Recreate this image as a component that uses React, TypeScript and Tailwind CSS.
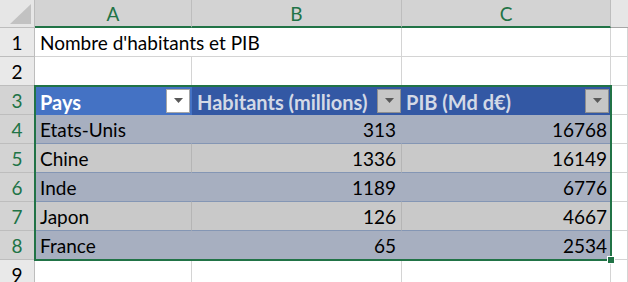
const cols = ["A", "B", "C"];

type Row = { pays: string; hab: number; pib: number };

const rows: Row[] = [
  { pays: "Etats-Unis", hab: 313, pib: 16768 },
  { pays: "Chine", hab: 1336, pib: 16149 },
  { pays: "Inde", hab: 1189, pib: 6776 },
  { pays: "Japon", hab: 126, pib: 4667 },
  { pays: "France", hab: 65, pib: 2534 },
];

function Dropdown({ active }: { active?: boolean }) {
  return (
    <span
      className={
        "flex h-[24px] w-[24px] shrink-0 items-center justify-center border " +
        (active ? "border-[#a6a6a6] bg-white" : "border-[#8f8f8f] bg-[#c6c6c6]")
      }
    >
      <svg width="9" height="5" viewBox="0 0 9 5">
        <path d="M0 0h9L4.5 5z" fill="#595959" />
      </svg>
    </span>
  );
}

function RowHead({ n, sel }: { n: number; sel?: boolean }) {
  return (
    <div
      className={
        "flex h-[29px] items-center justify-center border-b border-r border-[#bdbdbd] pt-[2px] " +
        (sel ? "bg-[#d3d3d3] text-[#217346]" : "bg-[#e9e9e9] text-black")
      }
    >
      {n}
    </div>
  );
}

function Cell({ children, right }: { children?: React.ReactNode; right?: boolean }) {
  return (
    <div
      className={
        "flex h-[29px] items-center border-b border-r border-[#d4d4d4] bg-white px-[5px] " +
        (right ? "justify-end" : "")
      }
    >
      {children}
    </div>
  );
}

export default function App() {
  return (
    <div
      className="relative h-[282px] w-[628px] overflow-hidden bg-white text-[19px] text-black"
      style={{ fontFamily: "Lato, 'Open Sans', sans-serif" }}
    >
      <div className="grid grid-cols-[35px_157px_210px_209px_17px]">
        {/* column headers */}
        <div className="relative h-[28px] border-b border-r border-[#bdbdbd] bg-[#e6e6e6]">
          <svg className="absolute bottom-[3px] right-[3px]" width="21" height="20" viewBox="0 0 21 20">
            <path d="M21 0v20H0z" fill="#c2c2c2" />
          </svg>
        </div>
        {cols.map((c) => (
          <div
            key={c}
            className="flex h-[28px] items-center justify-center border-b-2 border-r border-b-[#217346] border-r-[#bdbdbd] bg-[#d3d3d3] pt-[2px] text-[#217346]"
          >
            {c}
          </div>
        ))}
        <div className="h-[28px] border-b border-[#a6a6a6] bg-[#e6e6e6]" />

        {/* row 1 */}
        <RowHead n={1} />
        <div className="col-span-2 flex h-[29px] items-center border-b border-r border-[#d4d4d4] bg-white px-[5px] pt-[2px] whitespace-nowrap">
          Nombre d'habitants et PIB
        </div>
        <Cell />
        <Cell />

        {/* row 2 */}
        <RowHead n={2} />
        <Cell />
        <Cell />
        <Cell />
        <Cell />

        {/* row 3 : table header */}
        <RowHead n={3} sel />
        <div className="flex h-[29px] items-center justify-between bg-[#4472c4] pl-[5px] pr-[2px] text-[20px] font-bold text-white">
          <span className="pt-[2px]">Pays</span>
          <Dropdown active />
        </div>
        <div className="flex h-[29px] items-center justify-between bg-[#3358a4] pl-[5px] pr-[1px] text-[20px] font-bold text-[#d3d9e6]">
          <span className="pt-[2px]">Habitants (millions)</span>
          <Dropdown />
        </div>
        <div className="flex h-[29px] items-center justify-between bg-[#3358a4] pl-[4px] pr-[2px] text-[20px] font-bold text-[#d3d9e6]">
          <span className="pt-[2px]">PIB (Md d€)</span>
          <Dropdown />
        </div>
        <Cell />

        {/* data rows */}
        {rows.map((r, i) => {
          const band = i % 2 === 0 ? "bg-[#a7afc0]" : "bg-[#c9c9c9]";
          const sep = i % 2 === 0 ? "border-r-[#a7afc0]" : "border-r-[#b5b5b5]";
          return [
            <RowHead key={"h" + i} n={4 + i} sel />,
            <div key={"a" + i} className={`flex h-[29px] items-center border-b border-r border-b-[#8496b4] px-[5px] pt-[2px] ${sep} ${band}`}>
              {r.pays}
            </div>,
            <div key={"b" + i} className={`flex h-[29px] items-center justify-end border-b border-r border-b-[#8496b4] px-[5px] pt-[2px] ${sep} ${band}`}>
              {r.hab}
            </div>,
            <div key={"c" + i} className={`flex h-[29px] items-center justify-end border-b border-b-[#8496b4] px-[4px] pt-[2px] ${band}`}>
              {r.pib}
            </div>,
            <Cell key={"d" + i} />,
          ];
        })}

        {/* row 9 */}
        <RowHead n={9} />
        <Cell />
        <Cell />
        <Cell />
        <Cell />
      </div>

      {/* selection border + fill handle */}
      <div className="pointer-events-none absolute left-[34px] top-[85px] h-[176px] w-[578px] border-2 border-[#217346]" />
      <div className="absolute left-[607px] top-[256px] h-[8px] w-[8px] border border-white bg-[#217346]" />
    </div>
  );
}
